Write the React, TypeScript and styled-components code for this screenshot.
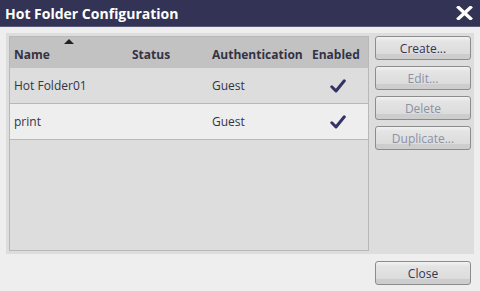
import React from 'react';
import { styled, createGlobalStyle } from 'styled-components';

const GlobalStyle = createGlobalStyle`
  html, body {
    margin: 0;
    padding: 0;
    background: #eeeeee;
  }
  body {
    font-family: 'Open Sans', 'Noto Sans', sans-serif;
    font-size: 12px;
    color: #333344;
  }
`;

const Dialog = styled.div`
  width: 480px;
  height: 291px;
  display: flex;
  flex-direction: column;
  background: #eeeeee;
  overflow: hidden;
`;

const TitleBar = styled.div`
  height: 26px;
  flex: none;
  display: flex;
  align-items: center;
  justify-content: space-between;
  padding: 0 7px 0 5px;
  background: #333355;
  border-bottom: 1px solid #5a5a78;
  color: #ffffff;
`;

const Title = styled.span`
  font-size: 14px;
  font-weight: 700;
`;

const CloseIcon = styled.svg`
  width: 17px;
  height: 14px;
  display: block;
`;

const Body = styled.div`
  flex: 1;
  display: flex;
  flex-direction: column;
  padding: 6px 6px 6px 6px;
`;

const Panel = styled.div`
  display: flex;
  gap: 6px;
  background: #dddddd;
  padding: 3px;
  height: 221px;
  box-sizing: border-box;
`;

const Table = styled.div`
  width: 360px;
  box-sizing: border-box;
  border: 1px solid #b8b8b8;
  background: #dddddd;
  display: flex;
  flex-direction: column;
`;

const COLS = '118px 80px 100px 1fr';

const HeaderRow = styled.div`
  display: grid;
  grid-template-columns: ${COLS};
  height: 31px;
  background: #c2c2c2;
  font-weight: 700;
  align-items: end;
`;

const HeaderCell = styled.div`
  position: relative;
  padding: 0 4px 5px 4px;
  line-height: 17px;
`;

const SortArrow = styled.span`
  position: absolute;
  left: 54px;
  top: -7px;
  width: 0;
  height: 0;
  border-left: 5px solid transparent;
  border-right: 5px solid transparent;
  border-bottom: 5px solid #222222;
`;

const Row = styled.div<{ $alt?: boolean }>`
  display: grid;
  grid-template-columns: ${COLS};
  height: 35px;
  align-items: center;
  background: ${({ $alt }) => ($alt ? '#eeeeee' : '#dddddd')};
  border-bottom: 1px solid #b8b8b8;
`;

const Cell = styled.div<{ $center?: boolean }>`
  padding: 0 4px;
  display: flex;
  justify-content: ${({ $center }) => ($center ? 'center' : 'flex-start')};
`;

const Check = styled.svg`
  width: 16px;
  height: 14px;
  display: block;
`;

const ButtonColumn = styled.div`
  display: flex;
  flex-direction: column;
  gap: 6px;
`;

const Button = styled.button`
  width: 96px;
  height: 24px;
  padding: 0;
  border: 1px solid #8c8c8c;
  border-radius: 3px;
  background: linear-gradient(
    to bottom,
    #f2f2f2 0%,
    #e4e4e4 20%,
    #dcdcdc 75%,
    #cdcdcd 76%,
    #cdcdcd 100%
  );
  font-family: 'Open Sans', 'Noto Sans', sans-serif;
  font-size: 12px;
  color: #333355;
  cursor: pointer;
  &:disabled {
    color: #8a92a6;
    cursor: default;
  }
`;

const Footer = styled.div`
  display: flex;
  justify-content: flex-end;
  padding: 7px 3px 0 0;
`;

const folders = [
  { name: 'Hot Folder01', status: '', auth: 'Guest', enabled: true },
  { name: 'print', status: '', auth: 'Guest', enabled: true },
];

const CheckMark = () => (
  <Check viewBox="0 0 16 14">
    <path
      d="M1.8 7.8 L6 12 L14.3 1.8"
      fill="none"
      stroke="#333366"
      strokeWidth="3"
      strokeLinecap="round"
      strokeLinejoin="round"
    />
  </Check>
);

const App = () => (
  <>
    <GlobalStyle />
    <Dialog>
      <TitleBar>
        <Title>Hot Folder Configuration</Title>
        <CloseIcon viewBox="0 0 17 14">
          <path
            d="M2.5 1.5 L14.5 12.5 M14.5 1.5 L2.5 12.5"
            stroke="#ffffff"
            strokeWidth="3.4"
            strokeLinecap="square"
          />
        </CloseIcon>
      </TitleBar>
      <Body>
        <Panel>
          <Table>
            <HeaderRow>
              <HeaderCell>
                <SortArrow />
                Name
              </HeaderCell>
              <HeaderCell>Status</HeaderCell>
              <HeaderCell>Authentication</HeaderCell>
              <HeaderCell>Enabled</HeaderCell>
            </HeaderRow>
            {folders.map((f, i) => (
              <Row key={f.name} $alt={i % 2 === 1}>
                <Cell>{f.name}</Cell>
                <Cell>{f.status}</Cell>
                <Cell>{f.auth}</Cell>
                <Cell $center>{f.enabled && <CheckMark />}</Cell>
              </Row>
            ))}
          </Table>
          <ButtonColumn>
            <Button>Create...</Button>
            <Button disabled>Edit...</Button>
            <Button disabled>Delete</Button>
            <Button disabled>Duplicate...</Button>
          </ButtonColumn>
        </Panel>
        <Footer>
          <Button>Close</Button>
        </Footer>
      </Body>
    </Dialog>
  </>
);

export default App;
